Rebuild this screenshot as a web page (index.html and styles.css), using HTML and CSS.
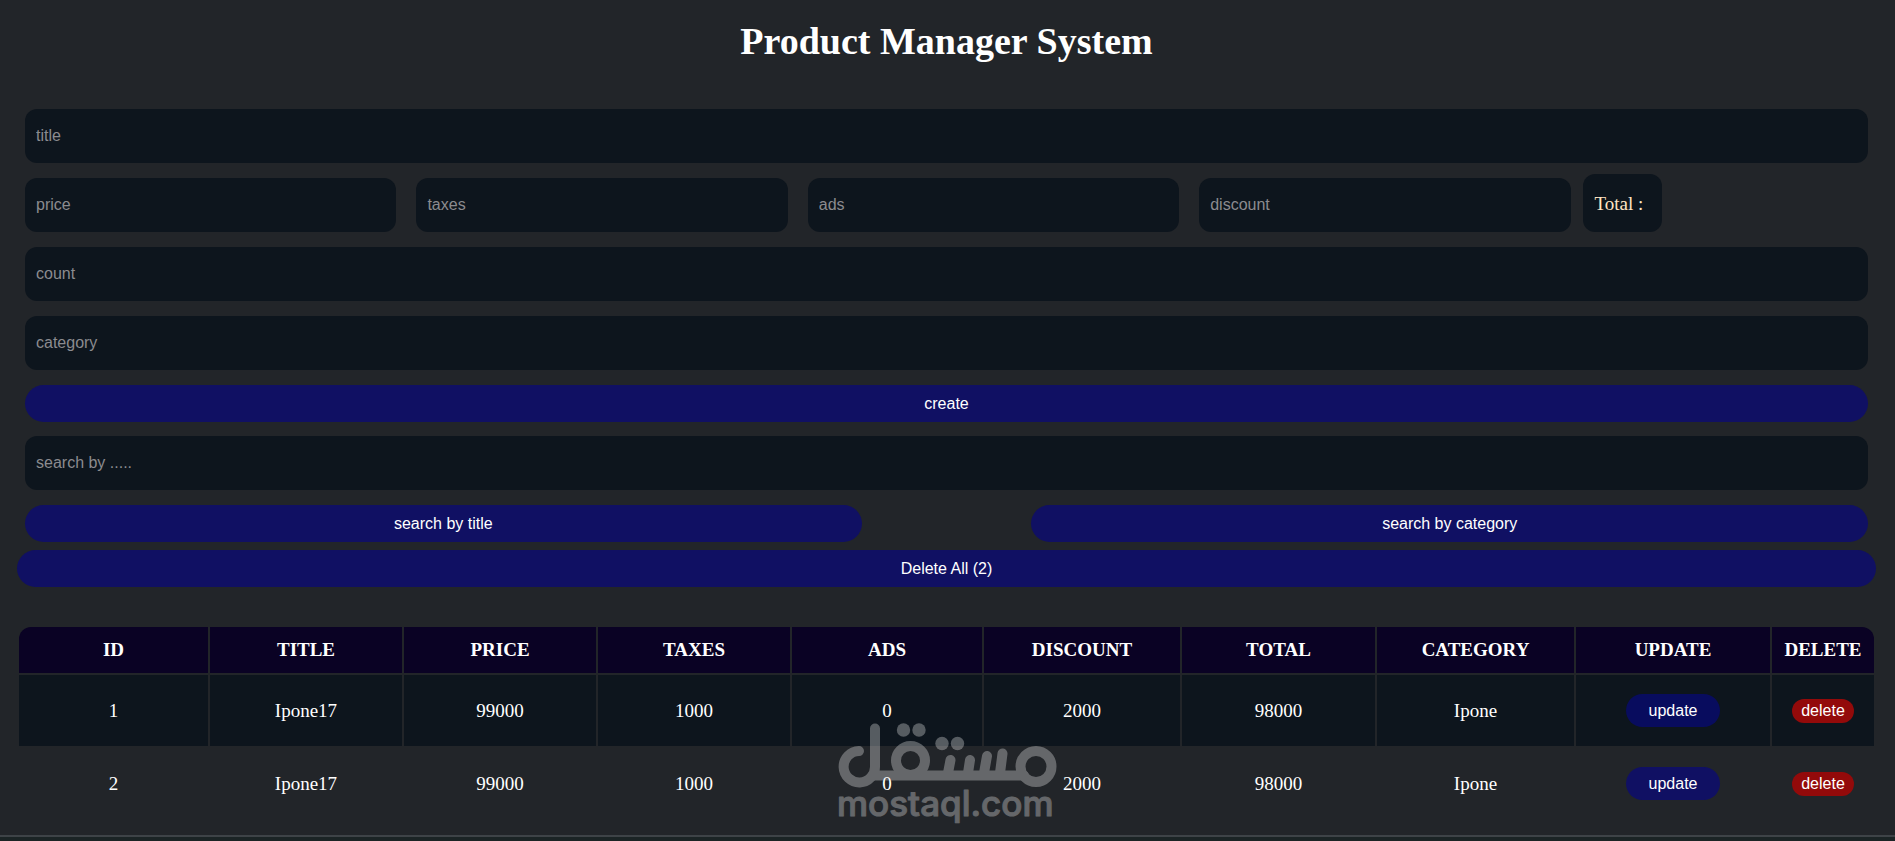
FILE: index.html
```html
<!DOCTYPE html>
<html lang="en">
<head>
    <meta charset="UTF-8">
    <meta name="viewport" content="width=device-width, initial-scale=1.0">
    <title>Product Manager System</title>
    <link rel="stylesheet" href="styles.css">
</head>
<body>

    <div class="container">
        <h1>Product Manager System</h1>

        <div class="inputs">
            <input type="text" id="title" placeholder="title" aria-label="title">
            <div class="price">
                <input type="text" id="price" placeholder="price" aria-label="price">
                <input type="text" id="taxes" placeholder="taxes" aria-label="taxes">
                <input type="text" id="ads" placeholder="ads" aria-label="ads">
                <input type="text" id="discount" placeholder="discount" aria-label="discount">
                <span class="total">Total :</span>
            </div>
            <input type="text" id="count" placeholder="count" aria-label="count">
            <input type="text" id="category" placeholder="category" aria-label="category">
            <button type="button" class="btn create">create</button>
        </div>

        <div class="search">
            <input type="text" id="search" placeholder="search by ....." aria-label="search">
            <div class="search-buttons">
                <button type="button" class="btn">search by title</button>
                <button type="button" class="btn">search by category</button>
            </div>
        </div>

        <button type="button" class="btn delete-all">Delete All (2)</button>

        <table>
            <colgroup>
                <col class="col-id">
                <col class="col-title">
                <col class="col-price">
                <col class="col-taxes">
                <col class="col-ads">
                <col class="col-discount">
                <col class="col-total">
                <col class="col-category">
                <col class="col-update">
                <col class="col-delete">
            </colgroup>
            <thead>
                <tr>
                    <th>ID</th>
                    <th>TITLE</th>
                    <th>PRICE</th>
                    <th>TAXES</th>
                    <th>ADS</th>
                    <th>DISCOUNT</th>
                    <th>TOTAL</th>
                    <th>CATEGORY</th>
                    <th>UPDATE</th>
                    <th>DELETE</th>
                </tr>
            </thead>
            <tbody>
                <tr>
                    <td>1</td>
                    <td>Ipone17</td>
                    <td>99000</td>
                    <td>1000</td>
                    <td>0</td>
                    <td>2000</td>
                    <td>98000</td>
                    <td>Ipone</td>
                    <td><button type="button" class="update">update</button></td>
                    <td><button type="button" class="delete">delete</button></td>
                </tr>
                <tr>
                    <td>2</td>
                    <td>Ipone17</td>
                    <td>99000</td>
                    <td>1000</td>
                    <td>0</td>
                    <td>2000</td>
                    <td>98000</td>
                    <td>Ipone</td>
                    <td><button type="button" class="update">update</button></td>
                    <td><button type="button" class="delete">delete</button></td>
                </tr>
            </tbody>
        </table>
    </div>

    <div class="bottom-bar"></div>

    <!-- logo over the table -->
    <svg class="watermark" width="220" height="104" viewBox="0 0 220 104" role="img" aria-label="mostaql.com">
        <g fill="none" stroke="#fff" stroke-width="10" stroke-linecap="round" stroke-linejoin="round">
            <path d="M21 28 A15.7 15.7 0 1 0 37 43 V5.500"/>
            <path d="M35 52.500 H186"/>
            <circle cx="72.500" cy="37.500" r="14.500"/>
            <circle cx="198" cy="43.500" r="15.500"/>
            <path d="M112.500 37 L110 50 M132 37 L130 50 M149 33 L146 50 M164.500 30.500 L162 50"/>
        </g>
        <g fill="#fff">
            <circle cx="65.500" cy="7" r="6.700"/>
            <circle cx="81" cy="7" r="6.700"/>
            <circle cx="104" cy="20.500" r="6.700"/>
            <circle cx="119.500" cy="20.500" r="6.700"/>
        </g>
        <text x="-1" y="93">mostaql.com</text>
    </svg>

</body>
</html>
```

FILE: styles.css
```css
* {
    box-sizing: border-box;
}

body {
    margin: 0;
    min-height: 100vh;
    display: flex;
    flex-direction: column;
    position: relative;
    background-color: #222529;
    color: #fff;
    font-family: "Liberation Serif", "Times New Roman", serif;
    font-size: 19px;
    overflow-x: hidden;
}

.container {
    flex: 1;
    padding: 0 19px 0 17px;
}

h1 {
    margin: 0;
    padding: 18px 0 45px;
    font-size: 38px;
    line-height: 46px;
    text-align: center;
}

.inputs, .search {
    display: flex;
    flex-direction: column;
    gap: 15px;
}

input {
    height: 54px;
    margin: 0 8px;
    padding: 0 11px;
    border: none;
    border-radius: 12px;
    outline: none;
    background-color: #0d151d;
    color: #fff;
    font-family: "Liberation Sans", Arial, sans-serif;
    font-size: 16px;
}

input::placeholder {
    color: #8b8b8f;
    opacity: 1;
}

.price {
    display: flex;
    align-items: flex-end;
    gap: 4px;
    height: 54px;
    padding-right: 2px;
}

.price input {
    width: 20%;
}

.total {
    height: 58px;
    padding: 0 19px 0 12px;
    border-radius: 12px;
    background-color: #0d151d;
    color: bisque;
    line-height: 60px;
    white-space: nowrap;
}

button {
    border: none;
    color: #fff;
    font-family: "Liberation Sans", Arial, sans-serif;
    font-size: 16px;
    cursor: pointer;
}

.btn {
    height: 37px;
    border-radius: 20px;
    background-color: #101063;
}

.create {
    margin: 0 8px 14px;
}

.search-buttons {
    display: flex;
    justify-content: space-between;
}

.search-buttons .btn {
    width: 45%;
    margin: 0 8px;
}

.delete-all {
    display: block;
    width: 100%;
    margin-top: 8px;
}

table {
    width: 100%;
    margin-top: 38px;
    table-layout: fixed;
    border-spacing: 2px;
    text-align: center;
}

.col-id {
    width: 189px;
}

.col-title, .col-price, .col-taxes {
    width: 192px;
}

.col-ads {
    width: 190px;
}

.col-discount {
    width: 196px;
}

.col-total {
    width: 193px;
}

.col-category {
    width: 197px;
}

.col-update {
    width: 194px;
}

.col-delete {
    width: 102px;
}

th {
    height: 46px;
    padding: 0;
    background-color: #0a0224;
}

th:first-child {
    border-top-left-radius: 12px;
}

th:last-child {
    border-top-right-radius: 12px;
}

td {
    height: 71px;
    padding: 0;
}

tbody tr:nth-child(odd) td {
    background-color: #0d151d;
}

.update {
    height: 33px;
    padding: 0 23px;
    border-radius: 20px;
    background-color: #101063;
}

tbody tr:nth-child(odd) .update {
    background-color: #080c5e;
}

.delete {
    height: 24px;
    padding: 0 9px;
    border-radius: 12px;
    background-color: #930a0a;
}

.bottom-bar {
    height: 6px;
    border-top: 2px solid #3e4347;
    background-color: #1b2425;
}

.watermark {
    position: absolute;
    left: 838px;
    bottom: 14px;
    opacity: 0.3;
    pointer-events: none;
}

.watermark text {
    fill: #fff;
    stroke: #fff;
    stroke-width: 1px;
    stroke-linejoin: round;
    font-family: Inter, "Liberation Sans", sans-serif;
    font-size: 35px;
    font-weight: 500;
}
```
